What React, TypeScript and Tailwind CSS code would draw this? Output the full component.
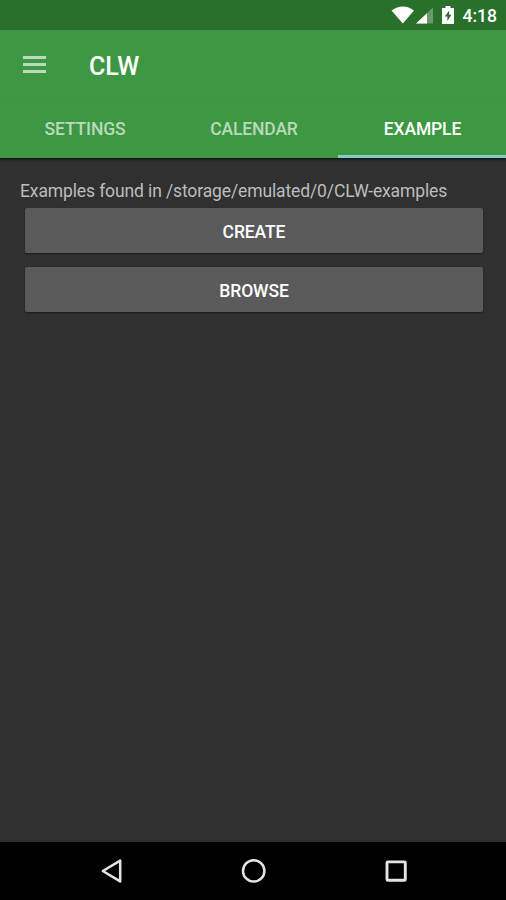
import { useState } from "react";
import clsx from "clsx";

const TABS = ["SETTINGS", "CALENDAR", "EXAMPLE"];
const ACTIONS = ["CREATE", "BROWSE"];

function StatusBar() {
  return (
    <div className="flex h-[30px] items-center justify-end bg-[#29702b] pr-[9px]">
      <svg width="72" height="30" viewBox="0 0 72 30">
        <path d="M0.5 10.5 Q12 2.5 23 10.5 L11.8 23.5 Z" fill="#fff" />
        <path d="M42 7.5 V23.5 H25 Z" fill="#fff" opacity="0.3" />
        <path d="M36 13.2 V23.5 H25 Z" fill="#fff" />
        <path d="M54.5 6 h5 v2 h3.5 v16 h-12 V8 h3.5 Z" fill="#fff" />
        <path d="M58.2 10.5 L53.8 16.6 H56.4 V21 L60.5 14.8 H58.2 Z" fill="#29702b" />
      </svg>
      <span className="pt-[2px] text-[17.5px] leading-[28px] font-medium text-white">4:18</span>
    </div>
  );
}

function Toolbar() {
  return (
    <header className="flex h-[70px] items-center bg-[#3e9742] pl-[23px]">
      <button type="button" aria-label="Menu" className="mr-[43px] mb-[2px] flex flex-col gap-[4px]">
        <span className="h-[3px] w-[23px] bg-[#b9dabb]" />
        <span className="h-[3px] w-[23px] bg-[#b9dabb]" />
        <span className="h-[3px] w-[23px] bg-[#b9dabb]" />
      </button>
      <h1 className="pt-[3px] text-[25px] font-medium text-white">CLW</h1>
    </header>
  );
}

function NavBar() {
  return (
    <nav className="flex h-[58px] items-center justify-center bg-black">
      <svg width="506" height="58" viewBox="0 0 506 58" fill="none" stroke="#e4e4e4" strokeWidth="2.5">
        <path d="M120.2 18.6 V39.4 L102.8 29 Z" strokeLinejoin="round" />
        <circle cx="253.7" cy="28.9" r="10.7" />
        <rect x="387" y="19.9" width="18.3" height="18.3" rx="0.8" strokeWidth="2.9" />
      </svg>
    </nav>
  );
}

export default function App() {
  const [active, setActive] = useState("EXAMPLE");

  return (
    <div className="flex h-[900px] w-[506px] flex-col overflow-hidden bg-[#303030] font-['Roboto',sans-serif]">
      <StatusBar />
      <Toolbar />
      <div className="grid h-[58px] shrink-0 grid-cols-[169px_169px_168px] bg-[#3e9742] shadow-[0_2px_2px_#161616]">
        {TABS.map((tab) => (
          <button
            key={tab}
            type="button"
            onClick={() => setActive(tab)}
            className={clsx(
              "border-b-[3px] pt-[3px] pl-px text-[17.5px] font-medium tracking-[-0.15px]",
              active === tab ? "border-[#80cbc4] text-white" : "border-transparent text-[#b9dabb]",
            )}
          >
            {tab}
          </button>
        ))}
      </div>

      <main className="flex-1 pt-[22px] pr-[20px] pl-[21px]">
        <p className="-ml-px text-[17.5px] leading-[23px] tracking-[-0.12px] whitespace-nowrap text-[#bdbdbd]">
          Examples found in /storage/emulated/0/CLW-examples
        </p>
        <div className="mr-[3px] ml-1 mt-[5px] flex flex-col gap-[14px]">
          {ACTIONS.map((label) => (
            <button
              key={label}
              type="button"
              className="h-[45px] rounded-[2px] bg-[#5a5a5b] pt-[3px] text-[17.5px] font-medium tracking-[-0.1px] text-white shadow-[0_1px_2px_#1c1c1c]"
            >
              {label}
            </button>
          ))}
        </div>
      </main>
      <NavBar />
    </div>
  );
}
